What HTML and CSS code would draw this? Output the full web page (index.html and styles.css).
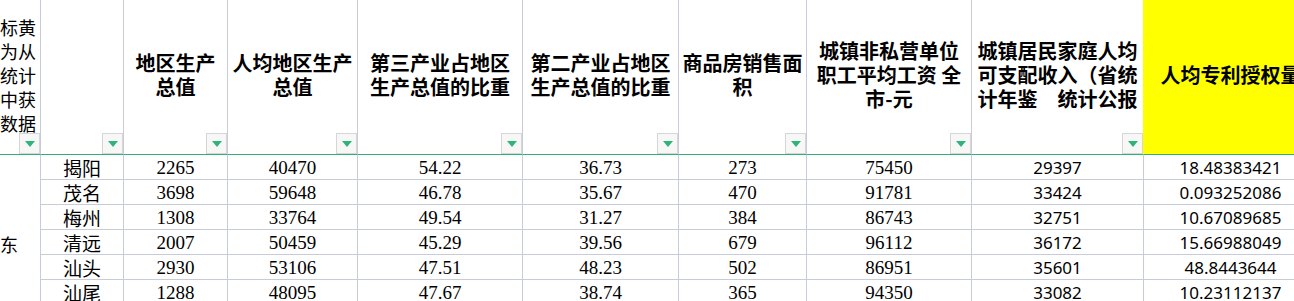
FILE: index.html
```html
<!DOCTYPE html>
<html lang="zh-CN">
<head>
<meta charset="utf-8">
<title>统计表</title>
<link rel="stylesheet" href="styles.css">
</head>
<body>
<div class="sheet">
  <div class="hcell side"><div class="htext">标黄<br>为从<br>统计<br>中获<br>数据</div><span class="filter"></span></div>
  <div class="hcell"><span class="filter"></span></div>
  <div class="hcell"><div class="htext">地区生产<br>总值</div><span class="filter"></span></div>
  <div class="hcell"><div class="htext">人均地区生产<br>总值</div><span class="filter"></span></div>
  <div class="hcell"><div class="htext">第三产业占地区<br>生产总值的比重</div><span class="filter"></span></div>
  <div class="hcell"><div class="htext">第二产业占地区<br>生产总值的比重</div><span class="filter"></span></div>
  <div class="hcell"><div class="htext">商品房销售面<br>积</div><span class="filter"></span></div>
  <div class="hcell"><div class="htext">城镇非私营单位<br>职工平均工资 全<br>市-元</div><span class="filter"></span></div>
  <div class="hcell before-yellow"><div class="htext">城镇居民家庭人均<br>可支配收入（省统<br>计年鉴　统计公报</div><span class="filter"></span></div>
  <div class="hcell yellow"><div class="htext">人均专利授权量</div><span class="filter"></span></div>

  <div class="cell side"></div><div class="cell city">揭阳</div><div class="cell serif">2265</div><div class="cell serif">40470</div><div class="cell serif">54.22</div><div class="cell serif">36.73</div><div class="cell serif">273</div><div class="cell serif">75450</div><div class="cell sans">29397</div><div class="cell sans">18.48383421</div>
  <div class="cell side"></div><div class="cell city">茂名</div><div class="cell serif">3698</div><div class="cell serif">59648</div><div class="cell serif">46.78</div><div class="cell serif">35.67</div><div class="cell serif">470</div><div class="cell serif">91781</div><div class="cell sans">33424</div><div class="cell sans">0.093252086</div>
  <div class="cell side"></div><div class="cell city">梅州</div><div class="cell serif">1308</div><div class="cell serif">33764</div><div class="cell serif">49.54</div><div class="cell serif">31.27</div><div class="cell serif">384</div><div class="cell serif">86743</div><div class="cell sans">32751</div><div class="cell sans">10.67089685</div>
  <div class="cell side region">东</div><div class="cell city">清远</div><div class="cell serif">2007</div><div class="cell serif">50459</div><div class="cell serif">45.29</div><div class="cell serif">39.56</div><div class="cell serif">679</div><div class="cell serif">96112</div><div class="cell sans">36172</div><div class="cell sans">15.66988049</div>
  <div class="cell side"></div><div class="cell city">汕头</div><div class="cell serif">2930</div><div class="cell serif">53106</div><div class="cell serif">47.51</div><div class="cell serif">48.23</div><div class="cell serif">502</div><div class="cell serif">86951</div><div class="cell sans">35601</div><div class="cell sans">48.8443644</div>
  <div class="cell side"></div><div class="cell city">汕尾</div><div class="cell serif">1288</div><div class="cell serif">48095</div><div class="cell serif">47.67</div><div class="cell serif">38.74</div><div class="cell serif">365</div><div class="cell serif">94350</div><div class="cell sans">33082</div><div class="cell sans">10.23112137</div>
</div>
</body>
</html>
```
FILE: styles.css
```css
html, body {
  margin: 0;
  padding: 0;
  background: #ffffff;
  overflow: hidden;
}

.sheet {
  display: grid;
  grid-template-columns: 41px 83px 104px 130px 165px 156px 128px 165px 172px 174px;
  grid-template-rows: 155px;
  grid-auto-rows: 25px;
  width: 1318px;
  color: #000;
  font-family: "Noto Sans CJK SC", sans-serif;
}

.hcell {
  position: relative;
  box-sizing: border-box;
  height: 155px;
  border-right: 1px solid #c8ccd8;
  border-bottom: 1px solid #2fb079;
  display: flex;
  align-items: center;
  justify-content: center;
  padding-bottom: 4px;
  overflow: hidden;
}

.hcell.side {
  justify-content: flex-end;
  padding-right: 4px;
}

.hcell.before-yellow {
  border-right-color: #ffff00;
}

.hcell.yellow {
  background: #ffff00;
}

.htext {
  font-size: 20px;
  line-height: 24px;
  font-weight: 700;
  text-align: center;
  white-space: nowrap;
}

.hcell.side .htext {
  font-weight: 400;
  font-size: 18px;
  text-align: right;
}

.filter {
  position: absolute;
  right: 0;
  bottom: 0;
  box-sizing: border-box;
  width: 21px;
  height: 21px;
  border: 1px solid #d6d6d6;
  background: #f7f7f7;
  display: flex;
  align-items: center;
  justify-content: center;
}

.filter::after {
  content: "";
  width: 0;
  height: 0;
  border-left: 5px solid transparent;
  border-right: 5px solid transparent;
  border-top: 6px solid #2db47a;
}

.cell {
  box-sizing: border-box;
  border-right: 1px solid #c8ccd8;
  border-bottom: 1px solid #c8ccd8;
  display: flex;
  align-items: center;
  justify-content: center;
  padding-top: 2px;
  line-height: 22px;
  white-space: nowrap;
  overflow: hidden;
}

.cell.side {
  border-bottom: none;
  justify-content: flex-start;
}

.cell.region {
  font-size: 18px;
}

.city {
  font-size: 19px;
}

.serif {
  font-family: "Liberation Serif", serif;
  font-size: 19px;
}

.sans {
  font-family: "Noto Sans", sans-serif;
  font-size: 17px;
}
```
